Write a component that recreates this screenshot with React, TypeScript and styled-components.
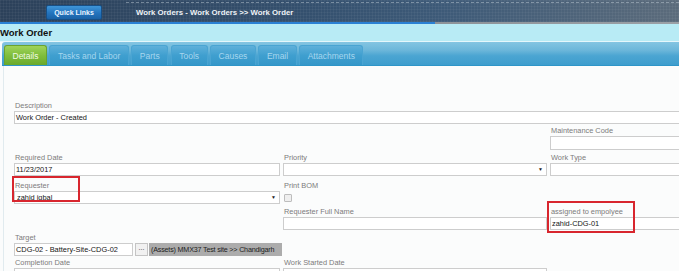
import React from "react";
import styled, { createGlobalStyle } from "styled-components";

const GlobalStyle = createGlobalStyle`
  html, body { margin: 0; padding: 0; background: #fbfcfc; }
  body { font-family: "Liberation Sans", Arial, sans-serif; }
  * { box-sizing: border-box; }
`;

const Page = styled.div`
  width: 679px;
  height: 271px;
  overflow: hidden;
  background: #fbfcfc;
`;

const Header = styled.div`
  height: 22px;
  display: flex;
  align-items: center;
  padding-left: 46px;
  background:
    repeating-linear-gradient(90deg, rgba(255,255,255,0.04) 0 1px, transparent 1px 3px),
    repeating-linear-gradient(0deg, rgba(255,255,255,0.04) 0 1px, transparent 1px 3px),
    linear-gradient(90deg, #2c415a 0%, #34506e 45%, #3d5a78 65%, #5b6b7b 100%);
  position: relative;
  &::before {
    content: "";
    position: absolute;
    left: 126px;
    right: 0;
    top: 2px;
    border-top: 1px dashed rgba(200, 210, 220, 0.45);
  }
`;

const QuickLinks = styled.div`
  width: 56px;
  height: 15px;
  margin-top: 2px;
  border-radius: 2px;
  background: linear-gradient(180deg, #3f95d8 0%, #2373bd 55%, #1b62a6 100%);
  border: 1px solid #174f86;
  color: #eaf4ff;
  font-size: 7px;
  font-weight: bold;
  display: flex;
  align-items: center;
  justify-content: center;
`;

const Breadcrumb = styled.div`
  margin-left: 34px;
  margin-top: 2px;
  color: #eef2f6;
  font-size: 7.8px;
  font-weight: bold;
`;

const HeaderRule = styled.div`
  height: 2px;
  background: linear-gradient(90deg, #2a80d4 0, #2a80d4 435px, #8d9298 435px, #9ba0a6 100%);
`;

const TitleBand = styled.div`
  height: 18px;
  background: #b8ebf5;
  font-size: 9.5px;
  font-weight: bold;
  color: #111;
  line-height: 18px;
  border-bottom: 1px solid #e6f7fb;
`;

const TabBar = styled.div`
  height: 24px;
  display: flex;
  align-items: flex-end;
  gap: 2.5px;
  padding-left: 2px;
  margin-left: 2px;
  border-radius: 3px 0 0 0;
  background: linear-gradient(180deg, #84c5e2 0%, #6db7da 35%, #4ba5d2 60%, #3e9dcd 100%);
  border-bottom: 1px solid #2e95c8;
`;

const Tab = styled.div<{ $active?: boolean }>`
  height: 20px;
  padding: 0 7.5px;
  border-radius: 3px 3px 0 0;
  font-size: 8.5px;
  line-height: 20px;
  white-space: nowrap;
  color: ${(p) => (p.$active ? "#f2fbe6" : "#a6d6ee")};
  background: ${(p) =>
    p.$active
      ? "linear-gradient(180deg, #9fd35a 0%, #7fbe3c 50%, #6aa92c 100%)"
      : "linear-gradient(180deg, #5fb0da 0%, #3f9fcf 50%, #3597c9 100%)"};
  border: 1px solid ${(p) => (p.$active ? "#6aa32f" : "#4aa4d2")};
  border-bottom: none;
`;

const Content = styled.div`
  margin-left: 3px;
  border-left: 1px solid #e1ebef;
  padding: 35px 0 0 10px;
  height: 206px;
`;

const FormGrid = styled.div`
  display: grid;
  grid-template-columns: 266px 264px 140px;
  grid-template-rows: 25px 27px 28px 26px 26px 25px 25px;
  column-gap: 3px;
  width: 676px;
`;

const Field = styled.div<{ $col: string; $row: number }>`
  grid-column: ${(p) => p.$col};
  grid-row: ${(p) => p.$row};
  position: relative;
  display: flex;
  flex-direction: column;
`;

const Label = styled.div`
  height: 10px;
  line-height: 10px;
  font-size: 7.4px;
  color: #7b7b7b;
  padding-left: 1px;
  white-space: nowrap;
`;

const Input = styled.div<{ $width?: number; $tall?: boolean }>`
  height: ${(p) => (p.$tall ? 14 : 13)}px;
  width: ${(p) => (p.$width ? `${p.$width}px` : "100%")};
  flex-shrink: 0;
  border: 1px solid #cdcdcd;
  background: #fff;
  font-size: 7.4px;
  line-height: 11px;
  color: #151515;
  padding-left: 1px;
  display: flex;
  align-items: center;
  justify-content: space-between;
  white-space: nowrap;
  overflow: hidden;
`;

const Arrow = styled.span`
  font-size: 5px;
  color: #222;
  margin-right: 3px;
`;

const Checkbox = styled.div`
  width: 8px;
  height: 8px;
  margin: 3px 0 0 1px;
  border: 1px solid #bdbdbd;
  background: #efefef;
  border-radius: 1px;
`;

const TargetRow = styled.div`
  display: flex;
  align-items: center;
  height: 13px;
  width: 268px;
`;

const DotsButton = styled.div`
  width: 13px;
  height: 13px;
  margin-left: 2px;
  border: 1px solid #c4c4c4;
  background: #f1f1f1;
  font-size: 7px;
  line-height: 8px;
  text-align: center;
  color: #333;
  flex-shrink: 0;
`;

const AssetPath = styled.div`
  flex: 1;
  height: 13px;
  margin-left: 1px;
  background: #acacac;
  color: #1c1c1c;
  font-size: 7.2px;
  letter-spacing: -0.2px;
  line-height: 13px;
  padding-left: 2px;
  white-space: nowrap;
  overflow: hidden;
`;

const Highlight = styled.div<{ $l: number; $t: number; $w: number; $h: number }>`
  position: absolute;
  left: ${(p) => p.$l}px;
  top: ${(p) => p.$t}px;
  width: ${(p) => p.$w}px;
  height: ${(p) => p.$h}px;
  border: 2px solid #d8262e;
  pointer-events: none;
`;

const tabs = ["Details", "Tasks and Labor", "Parts", "Tools", "Causes", "Email", "Attachments"];

export default function App() {
  return (
    <>
      <GlobalStyle />
      <Page>
        <Header>
          <QuickLinks>Quick Links</QuickLinks>
          <Breadcrumb>Work Orders - Work Orders &gt;&gt; Work Order</Breadcrumb>
        </Header>
        <HeaderRule />
        <TitleBand>Work Order</TitleBand>
        <TabBar>
          {tabs.map((t, i) => (
            <Tab key={t} $active={i === 0}>
              {t}
            </Tab>
          ))}
        </TabBar>
        <Content>
          <FormGrid>
            <Field $col="1 / 4" $row={1}>
              <Label>Description</Label>
              <Input>Work Order - Created</Input>
            </Field>

            <Field $col="3" $row={2}>
              <Label>Maintenance Code</Label>
              <Input $tall />
            </Field>

            <Field $col="1" $row={3}>
              <Label>Required Date</Label>
              <Input>11/23/2017</Input>
            </Field>
            <Field $col="2" $row={3}>
              <Label>Priority</Label>
              <Input>
                <span />
                <Arrow>▼</Arrow>
              </Input>
            </Field>
            <Field $col="3" $row={3}>
              <Label>Work Type</Label>
              <Input />
            </Field>

            <Field $col="1" $row={4}>
              <Label>Requester</Label>
              <Input>
                <span style={{ paddingLeft: 1 }}>zahid iqbal</span>
                <Arrow>▼</Arrow>
              </Input>
              <Highlight $l={-2} $t={-5} $w={68} $h={26} />
            </Field>
            <Field $col="2" $row={4}>
              <Label>Print BOM</Label>
              <Checkbox />
            </Field>

            <Field $col="2" $row={5}>
              <Label>Requester Full Name</Label>
              <Input />
            </Field>
            <Field $col="3" $row={5}>
              <Label>assigned to empolyee</Label>
              <Input>zahid-CDG-01</Input>
              <Highlight $l={-3} $t={-6} $w={88} $h={32} />
            </Field>

            <Field $col="1" $row={6}>
              <Label>Target</Label>
              <TargetRow>
                <Input $width={119}>CDG-02 - Battery-Site-CDG-02</Input>
                <DotsButton>...</DotsButton>
                <AssetPath>(Assets) MMX37 Test site &gt;&gt; Chandigarh</AssetPath>
              </TargetRow>
            </Field>

            <Field $col="1" $row={7}>
              <Label>Completion Date</Label>
              <Input />
            </Field>
            <Field $col="2" $row={7}>
              <Label>Work Started Date</Label>
              <Input />
            </Field>
          </FormGrid>
        </Content>
      </Page>
    </>
  );
}
